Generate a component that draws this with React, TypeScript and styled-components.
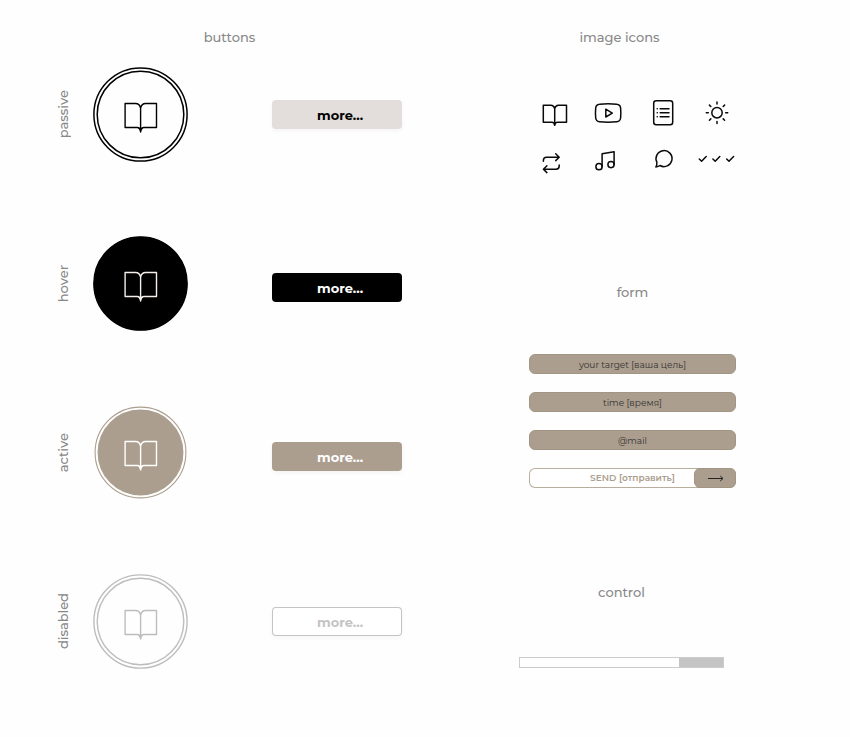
import React from "react";
import styled, { createGlobalStyle, css } from "styled-components";

type State = "passive" | "hover" | "active" | "disabled";

const sand = "#ab9e8e";
const mist = "#c4c4c4";

const GlobalStyle = createGlobalStyle`
  *, *::before, *::after { box-sizing: border-box; }
  body {
    margin: 0;
    background: #fefefe;
    color: #000;
    font-family: Montserrat, Inter, "Noto Sans", sans-serif;
  }
  button, input { font: inherit; }
`;

const Page = styled.main`
  display: grid;
  grid-template-columns: 54% 1fr;
  padding: 27px 0 64px;
`;

const Heading = styled.h2`
  margin: 0;
  color: #888;
  font-size: 13px;
  font-weight: 500;
  line-height: 20px;
  text-align: center;
`;

const ButtonStates = styled.section`
  display: flex;
  flex-direction: column;
  gap: 20px;
`;

const StateList = styled.div`
  display: flex;
  flex-direction: column;
  gap: 74px;
  padding: 0 57px 0 46px;
`;

const StateRow = styled.div`
  display: grid;
  grid-template-columns: 34px 95px 1fr;
  column-gap: 13px;
  align-items: center;
  height: 95px;
`;

const StateLabel = styled.span`
  justify-self: center;
  writing-mode: vertical-rl;
  transform: rotate(180deg);
  color: #888;
  font-size: 13px;
  font-weight: 500;
  line-height: 20px;
`;

const CircleButton = styled.button`
  width: 95px;
  height: 95px;
  padding: 0;
  border: 0;
  border-radius: 50%;
  background: none;
`;

const CircleDrawing = styled.svg`
  display: block;
  width: 95px;
  height: 95px;
`;

const moreLook = {
  passive: css`
    background: #e3dedb;
    color: #000;
    box-shadow: 0 2px 4px #f6f5f5;
  `,
  hover: css`
    margin-top: 8px;
    background: #000;
    color: #fff;
  `,
  active: css`
    margin-top: 8px;
    background: ${sand};
    color: #fff;
    box-shadow: 0 2px 4px #f4f3f2;
  `,
  disabled: css`
    box-shadow: inset 0 0 0 1px ${mist}, 0 2px 4px #f6f6f6;
    background: #fff;
    color: ${mist};
  `,
};

const MoreButton = styled.button<{ $state: State }>`
  justify-self: end;
  width: 130px;
  height: 29px;
  padding: 0 0 0 6px;
  border: 0;
  border-radius: 4px;
  font-size: 13px;
  font-weight: 700;
  line-height: 20px;
  ${(p) => moreLook[p.$state]}
`;

const Samples = styled.div`
  display: flex;
  flex-direction: column;
  gap: 94px;
  padding-right: 44px;
`;

const Group = styled.section`
  display: flex;
  flex-direction: column;
  align-items: center;
`;

const InsetHeading = styled(Heading)`
  padding-right: 26px;
`;

const IconGrid = styled.div`
  display: grid;
  grid-template-columns: repeat(4, 54px);
  grid-auto-rows: 48px;
  place-items: center;
  margin: 42px 0 3px;
  padding-left: 5px;
`;

const Icon = styled.svg`
  width: 40px;
  height: 40px;
  overflow: visible;
  fill: none;
  stroke: #0a0a0a;
  stroke-width: 1.5;
  stroke-linecap: round;
  stroke-linejoin: round;
`;

const TargetForm = styled.form`
  display: flex;
  flex-direction: column;
  gap: 18px;
  width: 207px;
  margin-top: 52px;
`;

const Field = styled.input`
  width: 100%;
  height: 20px;
  padding: 0 8px;
  border: 1px solid #a39583;
  border-radius: 6px;
  background: ${sand};
  color: #333;
  font-size: 9px;
  line-height: 12px;
  text-align: center;
  &::placeholder { color: #333; opacity: 1; }
`;

const SendButton = styled.button`
  display: grid;
  grid-template-columns: 42px 1fr 42px;
  align-items: center;
  height: 20px;
  padding: 0;
  border: 0;
  border-radius: 6px;
  box-shadow: inset 0 0 0 1px #b9ad9e;
  background: #fff;
  color: ${sand};
  font-size: 9px;
  font-weight: 600;
  line-height: 12px;
`;

const SendText = styled.span`
  grid-column: 2;
`;

const SendArrow = styled.span`
  display: grid;
  place-items: center;
  height: 20px;
  border: 1px solid #a39583;
  border-radius: 6px;
  background: ${sand};
`;

const ControlGroup = styled(Group)`
  padding-right: 22px;
`;

const Slider = styled.input`
  appearance: none;
  width: 205px;
  height: 11px;
  margin: 55px 0 0;
  border: 1px solid #ccc;
  background: #fff;
  &::-webkit-slider-thumb {
    appearance: none;
    width: 44px;
    height: 9px;
    border: 0;
    background: ${mist};
  }
  &::-moz-range-thumb {
    width: 44px;
    height: 9px;
    border: 0;
    border-radius: 0;
    background: ${mist};
  }
`;

const circleColors = {
  passive: { ring: "#000", fill: "none", book: "#000", outer: 46.6, inner: 43.3, line: 1.5 },
  hover: { ring: "#000", fill: "#000", book: "#f5efec", outer: 46.6, inner: 46, line: 1.5 },
  active: { ring: sand, fill: sand, book: "#fff", outer: 45.4, inner: 42.4, line: 1.1 },
  disabled: { ring: "#bdbdbd", fill: "none", book: "#bdbdbd", outer: 46.6, inner: 43.3, line: 1.4 },
};

const BookCircle = ({ state }: { state: State }) => {
  const { ring, fill, book, outer, inner, line } = circleColors[state];
  return (
    <CircleDrawing viewBox="0 0 95 95" fill="none" strokeWidth={line} strokeLinejoin="round" aria-hidden="true">
      <circle cx="47.5" cy="47.5" r={outer} stroke={ring} />
      <circle cx="47.5" cy="47.5" r={inner} stroke={ring} fill={fill} />
      <path
        stroke={book}
        strokeWidth="1.4"
        d="M47.6 41C46.9 38.2 45.1 36.5 42.6 36.5H32.1V60.5H44.3C45.9 60.5 47.1 61.7 47.6 65C48.1 61.7 49.3 60.5 50.9 60.5H63.5V36.5H52.6C50.1 36.5 48.3 38.2 47.6 41V65"
      />
      <path fill={book} d="M45 60.7H50.2L47.6 64Z" />
    </CircleDrawing>
  );
};

const states: State[] = ["passive", "hover", "active", "disabled"];

const fields = [
  { name: "target", type: "text", text: "your target [ваша цель]" },
  { name: "time", type: "text", text: "time [время]" },
  { name: "mail", type: "email", text: "@mail" },
];

export default function App() {
  return (
    <>
      <GlobalStyle />
      <Page>
        <ButtonStates>
          <Heading>buttons</Heading>
          <StateList>
            {states.map((state) => (
              <StateRow key={state}>
                <StateLabel>{state}</StateLabel>
                <CircleButton type="button" disabled={state === "disabled"} aria-label="Read">
                  <BookCircle state={state} />
                </CircleButton>
                <MoreButton type="button" $state={state} disabled={state === "disabled"}>
                  more...
                </MoreButton>
              </StateRow>
            ))}
          </StateList>
        </ButtonStates>

        <Samples>
          <Group>
            <InsetHeading>image icons</InsetHeading>
            <IconGrid>
              <Icon viewBox="0 0 40 40" role="img" aria-label="Book">
                <path d="M20.7 15.5C20 13.2 18.8 12.3 17 12.3H9.3V29.2H18C19.6 29.2 20.3 30 20.7 32.3C21.1 30 21.8 29.2 23.4 29.2H32.5V12.3H24.4C22.6 12.3 21.4 13.2 20.7 15.5V32.3" />
              </Icon>
              <Icon viewBox="0 0 40 40" role="img" aria-label="Video">
                <path d="M11.5 11.3Q20 10.3 28.8 11.3Q32.2 11.6 32.6 15Q33.1 20 32.6 25Q32.2 28.4 28.8 28.7Q20 29.6 11.5 28.7Q8.1 28.4 7.7 25Q7.2 20 7.7 15Q8.1 11.6 11.5 11.3Z" />
                <path d="M17.8 16.2V24L24.3 20.1Z" />
              </Icon>
              <Icon viewBox="0 0 40 40" role="img" aria-label="List">
                <rect x="11.7" y="7.7" width="19" height="24" rx="2.5" />
                <path d="M18.2 15.7H27M18.2 19.7H27M18.2 23.7H27M15.2 15.7H15.3M15.2 19.7H15.3M15.2 23.7H15.3" />
              </Icon>
              <Icon viewBox="0 0 40 40" role="img" aria-label="Sun">
                <circle cx="21" cy="19.7" r="5.2" />
                <path d="M21 9V11M21 28.4V30.4M10.3 19.7H12.3M29.7 19.7H31.7M13.4 12.1L14.8 13.5M27.2 25.9L28.6 27.3M13.4 27.3L14.8 25.9M27.2 13.5L28.6 12.1" />
              </Icon>
              <Icon viewBox="0 0 40 40" role="img" aria-label="Repeat">
                <path d="M9.4 20.3V19.3Q9.4 16.2 12.6 16.2H25M21.7 12.8L25.2 16.2L21.7 19.6M25.2 24V25Q25.2 28.2 22 28.2H9.6M12.9 24.8L9.4 28.2L12.9 31.6" />
              </Icon>
              <Icon viewBox="0 0 40 40" role="img" aria-label="Music">
                <circle cx="11" cy="25.7" r="3.1" />
                <circle cx="23" cy="23.6" r="3.1" />
                <path d="M14.1 25.7V12.7L26.1 10.7V23.6" />
              </Icon>
              <Icon viewBox="0 0 40 40" role="img" aria-label="Message">
                <path d="M14.9 21.2A8 8 0 1 1 18 24.5Q16.4 25.7 13.9 25.9Q15 24.1 14.9 21.2Z" />
              </Icon>
              <Icon viewBox="0 0 40 40" role="img" aria-label="Done">
                <path d="M3.3 18L5.6 20.2L10.2 15.5M16.9 18L19.2 20.2L23.8 15.5M30.7 18L33 20.2L37.6 15.5" />
              </Icon>
            </IconGrid>
          </Group>

          <Group>
            <Heading>form</Heading>
            <TargetForm onSubmit={(event) => event.preventDefault()}>
              {fields.map((field) => (
                <Field key={field.name} name={field.name} type={field.type} placeholder={field.text} aria-label={field.text} />
              ))}
              <SendButton type="submit">
                <SendText>SEND [отправить]</SendText>
                <SendArrow>
                  <svg width="17" height="8" viewBox="0 0 17 8" fill="none" stroke="#222" strokeWidth="1" aria-hidden="true">
                    <path d="M1 4.5H15.7M13.2 2L16 4.5L13.2 7" />
                  </svg>
                </SendArrow>
              </SendButton>
            </TargetForm>
          </Group>

          <ControlGroup>
            <Heading as="label" htmlFor="control">control</Heading>
            <Slider id="control" type="range" min={0} max={100} defaultValue={100} />
          </ControlGroup>
        </Samples>
      </Page>
    </>
  );
}
